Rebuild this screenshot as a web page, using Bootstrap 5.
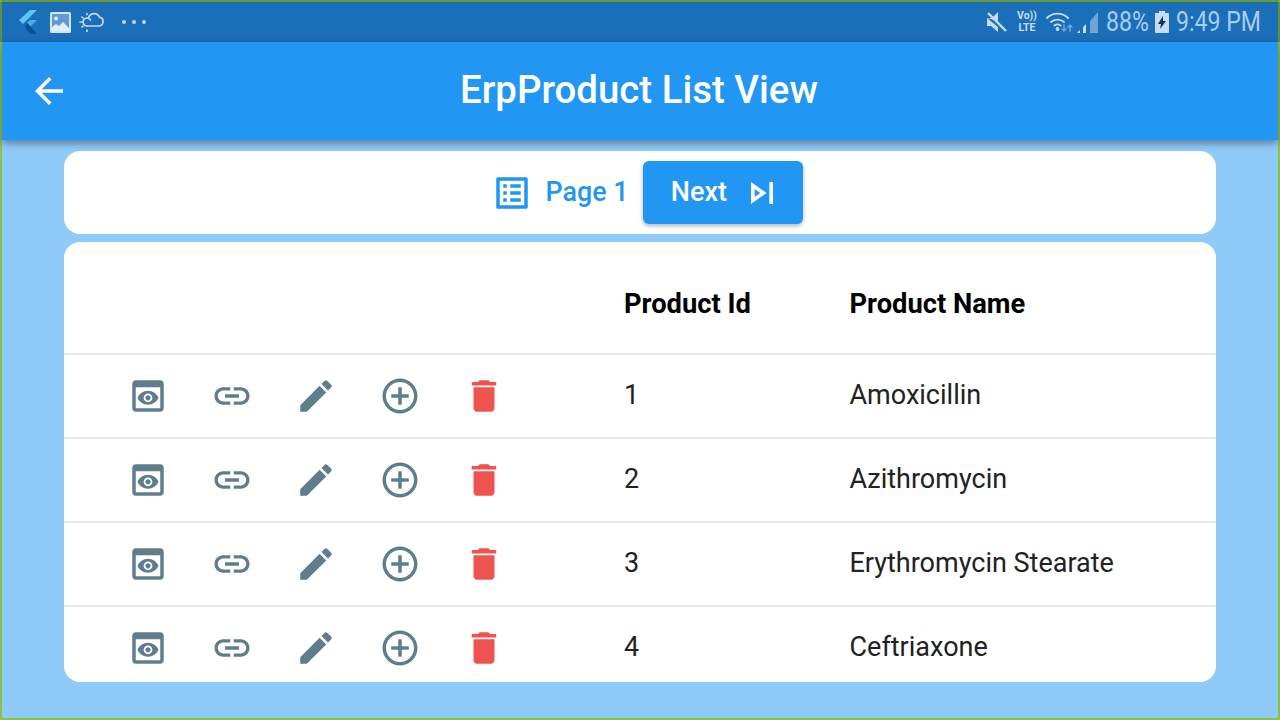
<!DOCTYPE html>
<html lang="en">
<head>
<meta charset="utf-8">
<title>ErpProduct List View</title>
<link href="https://cdn.jsdelivr.net/npm/bootstrap@5.3.0/dist/css/bootstrap.min.css" rel="stylesheet">
<style>
html,body{margin:0;height:720px;overflow:hidden;background:#90caf9;font-family:Roboto,"Liberation Sans",sans-serif}
.app-frame{height:720px;border:2px solid #8bc34a;border-top-color:#6a9a38;background:#90caf9}
.status-strip{height:40px;background:#1b6fb8;color:#a8cdf0;padding:0 18px 0 17px;box-shadow:-2px 0 0 #5f8f3f,2px 0 0 #5f8f3f}
.status-strip svg{display:block;flex:none}
.stat-text{display:inline-block;font-size:27px;line-height:40px;transform:scaleX(.855);transform-origin:left center;white-space:nowrap}
.stat-pct{width:42px;margin-left:8px}
.stat-time{width:84px;margin-left:7px}
.ico-image{margin-left:13px}
.ico-cloud{margin-left:8px}
.ico-dots{margin-left:18px;gap:6px}
.ico-wifi{margin-left:9px}
.ico-signal{margin-left:4px}
.ico-batt{margin-left:7px}
.sig-text{font-size:10.500px;line-height:12px;font-weight:700;text-align:center;width:20px;margin-left:10px;white-space:nowrap;color:#c6def4}
.app-head{height:98px;background:#2196f3;box-shadow:0 3px 8px rgba(0,0,0,.4);padding:0 12px;position:relative;z-index:2}
.app-head h1{font-size:38.400px;font-weight:500;color:#fff;margin:-2px 0 0;flex:1;text-align:center;padding-right:58px;line-height:1}
.back-ico{width:42px;height:42px;fill:#fff;margin-left:14px}
.sheet-area{padding:11px 62px 0}
.sheet{background:#fff;border-radius:16px}
.pager-sheet{height:83px;margin-bottom:8px;padding-left:14px}
.page-ico{width:42px;height:42px;fill:#2196f3;margin-right:13px}
.page-label{font-size:26.800px;font-weight:500;color:#2196f3;margin-right:15px}
.next-btn{width:160px;height:63px;background:#2196f3;color:#fff;border:0;border-radius:6px;font-size:27px;font-weight:500;box-shadow:0 2px 4px rgba(0,0,0,.3);padding:0 0 0 8px;gap:13px}
.next-btn:hover{background:#2196f3;color:#fff}
.next-btn svg{width:44px;height:44px;fill:#fff}
.grid-sheet{height:440px;overflow:hidden}
.grid-sheet table{width:1152px;table-layout:fixed;margin:0;font-size:27px;color:#222}
.grid-sheet th,.grid-sheet td{padding:0;vertical-align:middle;border-bottom:2px solid #e9e9e9;background:transparent}
.grid-sheet thead tr{height:112px}
.grid-sheet tbody tr{height:84px}
.grid-sheet th{font-weight:700;color:#000;font-size:27.300px;padding-top:14px}
.grid-sheet td.pid,.grid-sheet td.pname{padding-bottom:2px}
.col-actions{width:560px}
.col-id{width:225.500px}
.act-row{padding-left:42px}
.act-cell{width:84px;display:flex;justify-content:center}
.act-cell svg{width:42px;height:42px;fill:#607d8b;display:block}
.act-cell svg.del{fill:#ef5350}
</style>
</head>
<body>
<div class="app-frame d-flex flex-column">
  <div class="status-strip d-flex align-items-center justify-content-between">
    <div class="d-flex align-items-center">
      <svg width="18" height="24" viewBox="0 0 18 24"><path fill="#5ec3f7" d="M11 0h7L4 14 0 10z"/><path fill="#45aef0" d="M11 10h7l-6.500 6.500L8 13z"/><path fill="#0d4f93" d="M8 13l3.500 3.500L18 24h-7l-5-7z"/></svg>
      <svg class="ico-image" width="21" height="21" viewBox="0 0 21 21"><rect width="21" height="21" rx="1.500" fill="#d2e4f5"/><rect x="2" y="2" width="17" height="17" fill="#5f9bd0"/><path fill="#e3eef9" d="M2 19v-4l4-3 3 2 4-4 6 6v3z"/><circle cx="6" cy="6.500" r="2" fill="#e3eef9"/></svg>
      <svg class="ico-cloud" width="25" height="20" viewBox="0 0 25 20" fill="none" stroke="#bcd8f2" stroke-width="1.700" stroke-linecap="round"><path d="M8 14h11.500a4.500 4.500 0 0 0 1-8.900A6 6 0 0 0 9.500 5.500"/><path d="M8 14a4 4 0 1 1 3.500-6"/><path d="M8 1.500v1M8 18v1.500M1 10h2M3 5l1 1M3 15l1-1"/></svg>
      <div class="ico-dots d-flex"><svg width="4" height="4"><circle cx="2" cy="2" r="2" fill="#bcd8f2"/></svg><svg width="4" height="4"><circle cx="2" cy="2" r="2" fill="#bcd8f2"/></svg><svg width="4" height="4"><circle cx="2" cy="2" r="2" fill="#bcd8f2"/></svg></div>
    </div>
    <div class="d-flex align-items-center">
      <svg width="20" height="22" viewBox="0 0 20 22"><path fill="#c6def4" d="M0 7h5l6-6v9zM0 7v8h4l7 6v-5z"/><path stroke="#c6def4" stroke-width="2.400" d="M1 2l18 18"/></svg>
      <div class="sig-text">Vo))<br>LTE</div>
      <svg class="ico-wifi" width="27" height="24" viewBox="0 0 27 24" fill="none" stroke="#c6def4" stroke-width="1.800" stroke-linecap="round"><path d="M1 8a15 15 0 0 1 21 0M5 12a10 10 0 0 1 13 0M8.500 15.500a5 5 0 0 1 6 0"/><circle cx="11.500" cy="19" r="1" fill="#c6def4"/><path stroke="#6fa5d6" stroke-width="1.500" d="M18 15v6M16 19l2 2 2-2"/><path stroke="#6fa5d6" stroke-width="1.500" d="M24 21v-6M22 17l2-2 2 2"/></svg>
      <svg class="ico-signal" width="21" height="22" viewBox="0 0 21 22"><path fill="#c6def4" d="M0 22l3-3v3zM6 22v-6l3-3v9z"/><path fill="#6fa5d6" d="M13 10l8-9v21h-8z"/></svg>
      <span class="stat-text stat-pct">88%</span>
      <svg class="ico-batt" width="14" height="22" viewBox="0 0 14 22"><path fill="#c6def4" d="M4 0h6v2h3a1 1 0 0 1 1 1v18a1 1 0 0 1-1 1H1a1 1 0 0 1-1-1V3a1 1 0 0 1 1-1h3z"/><path fill="#12345a" d="M8 5L3 13h3l-1 5 6-8H8z"/></svg>
      <span class="stat-text stat-time">9:49 PM</span>
    </div>
  </div>
  <div class="app-head d-flex align-items-center">
    <svg class="back-ico" viewBox="0 0 24 24"><path d="M20 11H7.830l5.590-5.590L12 4l-8 8 8 8 1.410-1.410L7.830 13H20v-2z"/></svg>
    <h1>ErpProduct List View</h1>
  </div>
  <div class="sheet-area">
    <div class="sheet pager-sheet d-flex align-items-center justify-content-center">
      <svg class="page-ico" viewBox="0 0 24 24"><path d="M19 5v14H5V5h14m1.100-2H3.900c-.5 0-.9.4-.9.9v16.200c0 .4.4.9.9.9h16.200c.4 0 .9-.5.9-.9V3.900c0-.5-.5-.9-.9-.9zM11 7h6v2h-6V7zm0 4h6v2h-6v-2zm0 4h6v2h-6zM7 7h2v2H7zm0 4h2v2H7zm0 4h2v2H7z"/></svg>
      <span class="page-label">Page 1</span>
      <button type="button" class="btn next-btn d-flex align-items-center justify-content-center">Next
        <svg viewBox="0 0 24 24"><path d="M6 18l8.500-6L6 6v12zm2-8.140L11.030 12 8 14.140V9.860zM16 6h2v12h-2z"/></svg>
      </button>
    </div>
    <div class="sheet grid-sheet">
      <table class="table">
        <thead><tr><th class="col-actions"></th><th class="col-id">Product Id</th><th>Product Name</th></tr></thead>
        <tbody id="rows"></tbody>
      </table>
    </div>
  </div>
</div>
<template id="row-tpl">
<tr><td><div class="act-row d-flex">
  <span class="act-cell"><svg viewBox="0 0 24 24"><path d="M19 3H5c-1.110 0-2 .9-2 2v14c0 1.100.89 2 2 2h14c1.100 0 2-.9 2-2V5c0-1.100-.89-2-2-2zm0 16H5V7h14v12zm-5.500-6c0 .83-.67 1.500-1.500 1.500s-1.500-.67-1.500-1.500.67-1.500 1.500-1.500 1.500.67 1.500 1.500zM12 9c-2.730 0-5.060 1.660-6 4 .94 2.340 3.270 4 6 4s5.060-1.660 6-4c-.94-2.340-3.270-4-6-4zm0 6.500c-1.380 0-2.500-1.120-2.500-2.500s1.120-2.500 2.500-2.500 2.500 1.120 2.500 2.500-1.120 2.500-2.500 2.500z"/></svg></span>
  <span class="act-cell"><svg viewBox="0 0 24 24"><path d="M3.900 12c0-1.710 1.390-3.100 3.100-3.100h4V7H7c-2.760 0-5 2.240-5 5s2.240 5 5 5h4v-1.900H7c-1.710 0-3.100-1.390-3.100-3.100zM8 13h8v-2H8v2zm9-6h-4v1.900h4c1.710 0 3.100 1.390 3.100 3.100s-1.390 3.100-3.100 3.100h-4V17h4c2.760 0 5-2.240 5-5s-2.240-5-5-5z"/></svg></span>
  <span class="act-cell"><svg viewBox="0 0 24 24"><path d="M3 17.250V21h3.750L17.810 9.940l-3.750-3.750L3 17.250zM20.710 7.040c.39-.39.39-1.020 0-1.410l-2.340-2.340c-.39-.39-1.020-.39-1.410 0l-1.830 1.830 3.750 3.750 1.830-1.830z"/></svg></span>
  <span class="act-cell"><svg viewBox="0 0 24 24"><path d="M13 7h-2v4H7v2h4v4h2v-4h4v-2h-4V7zm-1-5C6.480 2 2 6.480 2 12s4.480 10 10 10 10-4.480 10-10S17.520 2 12 2zm0 18c-4.410 0-8-3.590-8-8s3.590-8 8-8 8 3.590 8 8-3.590 8-8 8z"/></svg></span>
  <span class="act-cell"><svg class="del" viewBox="0 0 24 24"><path d="M6 19c0 1.100.9 2 2 2h8c1.100 0 2-.9 2-2V7H6v12zM19 4h-3.500l-1-1h-5l-1 1H5v2h14V4z"/></svg></span>
</div></td><td class="pid"></td><td class="pname"></td></tr>
</template>
<script>
[["1","Amoxicillin"],["2","Azithromycin"],["3","Erythromycin Stearate"],["4","Ceftriaxone"]].forEach(function(r){
  var n=document.getElementById('row-tpl').content.cloneNode(true);
  n.querySelector('.pid').textContent=r[0];
  n.querySelector('.pname').textContent=r[1];
  document.getElementById('rows').appendChild(n);
});
</script>
<script src="https://cdn.jsdelivr.net/npm/bootstrap@5.3.0/dist/js/bootstrap.bundle.min.js"></script>
</body>
</html>
